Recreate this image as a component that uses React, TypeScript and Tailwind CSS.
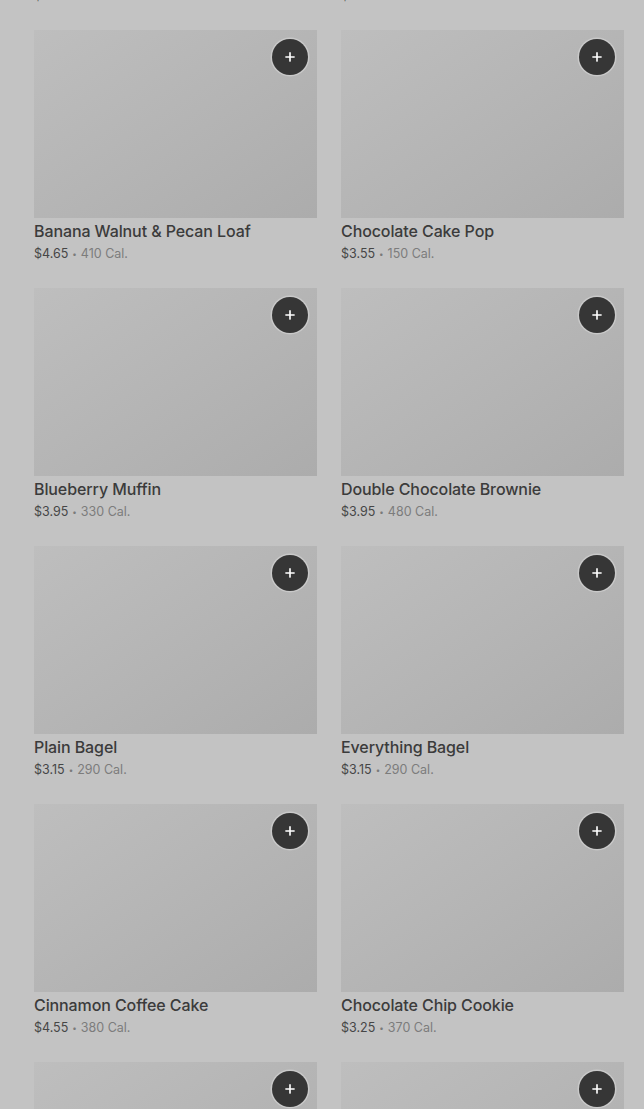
import { Plus } from "lucide-react";

type Item = {
	name: string;
	price: string;
	cal: string;
};

const items: Item[] = [
	{ name: "Iced Lemon Loaf", price: "$3.95", cal: "360 Cal." },
	{ name: "Butter Croissant", price: "$4.25", cal: "260 Cal." },
	{ name: "Banana Walnut & Pecan Loaf", price: "$4.65", cal: "410 Cal." },
	{ name: "Chocolate Cake Pop", price: "$3.55", cal: "150 Cal." },
	{ name: "Blueberry Muffin", price: "$3.95", cal: "330 Cal." },
	{ name: "Double Chocolate Brownie", price: "$3.95", cal: "480 Cal." },
	{ name: "Plain Bagel", price: "$3.15", cal: "290 Cal." },
	{ name: "Everything Bagel", price: "$3.15", cal: "290 Cal." },
	{ name: "Cinnamon Coffee Cake", price: "$4.55", cal: "380 Cal." },
	{ name: "Chocolate Chip Cookie", price: "$3.25", cal: "370 Cal." },
	{ name: "Vanilla Bean Scone", price: "$3.45", cal: "420 Cal." },
	{ name: "Cheese Danish", price: "$3.75", cal: "290 Cal." },
];

const Card = ({ item }: { item: Item }) => {
	return (
		<div className="flex flex-col">
			<div className="relative h-[188px] bg-linear-to-br from-[#bebebe] to-[#acacac]">
				<button className="absolute top-[9px] right-[9px] flex h-9 w-9 items-center justify-center rounded-full bg-[#363636] text-white ring-[1.5px] ring-[#d2d2d2]/70">
					<Plus size={14} strokeWidth={2.8} />
				</button>
			</div>
			<div className="mt-[3px] text-[16px] leading-[20px] font-medium tracking-[-0.1px] text-[#3b3b3b]">
				{item.name}
			</div>
			<div className="mt-[4px] flex items-center text-[12.5px] leading-[18px]">
				<span className="text-[#464646]">{item.price}</span>
				<span className="mx-[4px] text-[8px] text-[#7a7a7a]">•</span>
				<span className="text-[#7c7c7c]">{item.cal}</span>
			</div>
		</div>
	);
};

const App = () => {
	return (
		<div
			className="h-[1109px] overflow-hidden bg-[#c3c3c3]"
			style={{ fontFamily: "Inter, 'Liberation Sans', sans-serif" }}>
			<div className="-mt-[228px] grid grid-cols-2 gap-x-6 gap-y-[25px] pl-[34px] pr-[20px]">
				{items.map((item) => (
					<Card key={item.name} item={item} />
				))}
			</div>
		</div>
	);
};

export default App;
